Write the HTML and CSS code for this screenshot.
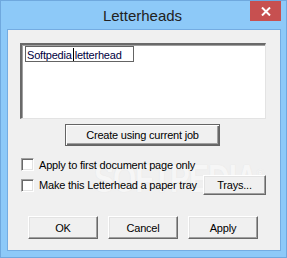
FILE: index.html
```html
<!DOCTYPE html>
<html>
<head>
	<meta charset="UTF-8">
	<title>Letterheads</title>
	<link rel="stylesheet" href="styles.css">
</head>
<body>
	<div class="window">
		<div class="titlebar">
			<span class="title">Letterheads</span>
			<span class="close">
				<svg width="10" height="9" viewBox="0 0 10 9"><path d="M1 0.5 L9 8.5 M9 0.5 L1 8.5" stroke="#fff" stroke-width="2"/></svg>
			</span>
		</div>
		<div class="client">
			<div class="watermark">SOFTPEDIA<sup>®</sup></div>

			<div class="listbox">
				<div class="edit">Softpedia<span class="caret"></span>letterhead</div>
			</div>

			<button class="btn btn-create">Create using current job</button>

			<label class="check-row row-first">
				<span class="checkbox"></span>
				<span>Apply to first document page only</span>
			</label>
			<div class="check-row row-second">
				<label class="check-label">
					<span class="checkbox"></span>
					<span>Make this Letterhead a paper tray</span>
				</label>
				<button class="btn btn-trays">Trays...</button>
			</div>

			<div class="actions">
				<button class="btn">OK</button>
				<button class="btn">Cancel</button>
				<button class="btn">Apply</button>
			</div>
		</div>
	</div>
</body>
</html>
```

FILE: styles.css
```css
body {
	margin: 0;
	font-family: "Liberation Sans", Arial, sans-serif;
}

.window {
	box-sizing: border-box;
	width: 287px;
	height: 258px;
	background-color: #8dc9f8;
	border: 1px solid #6fa8de;
	display: flex;
	flex-direction: column;
}

.titlebar {
	height: 28px;
	position: relative;
	display: flex;
	justify-content: center;
	align-items: center;
}
.title {
	font-size: 15px;
	color: #222;
	margin-left: -2px;
	margin-top: 1px;
}
.close {
	position: absolute;
	top: 0;
	right: 5px;
	width: 31px;
	height: 20px;
	background-color: #c75050;
	display: flex;
	align-items: center;
	justify-content: center;
}

.client {
	box-sizing: border-box;
	position: relative;
	margin-left: 6px;
	width: 274px;
	height: 222px;
	background-color: #f0f0f0;
	border: 1px solid #74ace2;
	display: flex;
	flex-direction: column;
	font-size: 11px;
	letter-spacing: -0.2px;
	color: #000;
}
.client > * {
	position: relative;
}

.listbox {
	box-sizing: border-box;
	margin: 13px 0 0 12px;
	width: 246px;
	height: 76px;
	background-color: #fff;
	border-top: 2px solid #696969;
	border-left: 2px solid #696969;
	border-right: 1px solid #e3e3e3;
	border-bottom: 1px solid #e3e3e3;
	box-shadow: inset 1px 1px 0 #a0a0a0;
	padding: 1px 0 0 3px;
}
.edit {
	box-sizing: border-box;
	width: 109px;
	height: 16px;
	border: 1px solid #646464;
	padding: 1px 0 0 1px;
	font-size: 11px;
	color: #000040;
	white-space: nowrap;
}
.caret {
	display: inline-block;
	width: 1px;
	height: 13px;
	background: #000;
	vertical-align: -2px;
	margin: 0 1px 0 1px;
}

.btn {
	box-sizing: border-box;
	font-family: "Liberation Sans", Arial, sans-serif;
	font-size: 11px;
	letter-spacing: -0.2px;
	color: #000;
	background-color: #f0f0f0;
	border: 1px solid;
	border-color: #fff #696969 #696969 #fff;
	box-shadow: inset -1px -1px 0 #a0a0a0, inset 1px 1px 0 #e3e3e3;
	padding: 0;
	width: 70px;
	height: 23px;
}
.btn-create {
	margin: 5px 0 0 57px;
	width: 155px;
	height: 22px;
	border: 1px solid #646464;
	box-shadow: inset 1px 1px 0 #fff, inset -1px -1px 0 #696969, inset -2px -2px 0 #a0a0a0;
}
.btn-trays {
	width: 63px;
	height: 20px;
	margin-left: auto;
	margin-right: 14px;
}

.check-row {
	display: flex;
	align-items: center;
	margin-left: 13px;
}
.row-first {
	margin-top: 12px;
	height: 13px;
}
.row-second {
	margin-top: 4px;
	height: 20px;
}
.check-label {
	display: flex;
	align-items: center;
}
.checkbox {
	box-sizing: border-box;
	width: 13px;
	height: 13px;
	background: #fff;
	border: 1px solid;
	border-color: #a0a0a0 #fff #fff #a0a0a0;
	box-shadow: inset 1px 1px 0 #696969, inset -1px -1px 0 #e3e3e3;
	margin-right: 5px;
	flex-shrink: 0;
}

.actions {
	display: flex;
	gap: 10px;
	margin: 21px 0 0 20px;
}

.client > .watermark {
	position: absolute;
	left: 86px;
	top: 132px;
	font-size: 30px;
	font-weight: bold;
	letter-spacing: -1px;
	color: #f6f6f6;
	text-shadow: 0 0 1px #e2e2e2;
	transform: scaleY(1.3);
	pointer-events: none;
}
.watermark sup {
	font-size: 10px;
}
```
